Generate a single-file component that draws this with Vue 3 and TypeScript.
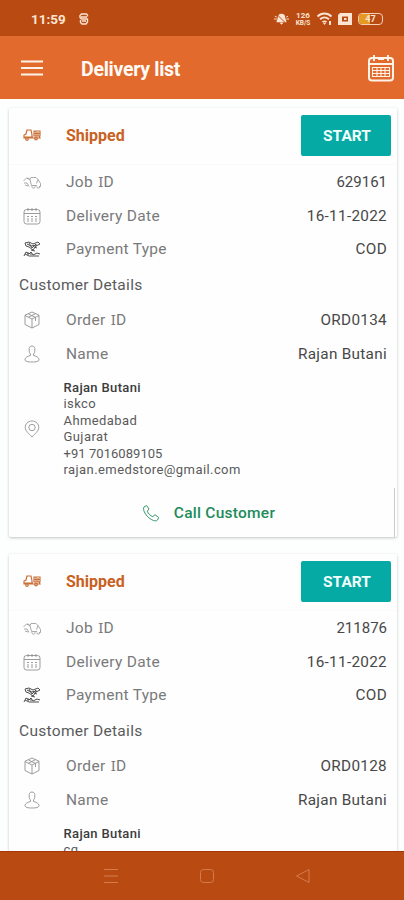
<script setup lang="ts">
interface Row {
  icon: 'job' | 'calendar' | 'payment' | 'box' | 'person'
  label: string
  value: string
}

interface Delivery {
  status: string
  job: Row[]
  customer: Row[]
  name: string
  address: string[]
}

function makeDelivery(jobId: string, orderId: string, address: string[]): Delivery {
  return {
    status: 'Shipped',
    job: [
      { icon: 'job', label: 'Job ID', value: jobId },
      { icon: 'calendar', label: 'Delivery Date', value: '16-11-2022' },
      { icon: 'payment', label: 'Payment Type', value: 'COD' },
    ],
    customer: [
      { icon: 'box', label: 'Order ID', value: orderId },
      { icon: 'person', label: 'Name', value: 'Rajan Butani' },
    ],
    name: 'Rajan Butani',
    address,
  }
}

const deliveries: Delivery[] = [
  makeDelivery('629161', 'ORD0134', ['iskco', 'Ahmedabad', 'Gujarat', '+91 7016089105', 'rajan.emedstore@gmail.com']),
  makeDelivery('211876', 'ORD0128', ['cg']),
]

// The capital I is set in a face that draws it with bars.
function splitLabel(label: string): { text: string; barred: boolean }[] {
  return label
    .split(/(I)/)
    .filter((text) => text !== '')
    .map((text) => ({ text, barred: text === 'I' }))
}

function isNumber(text: string): boolean {
  return /^[+\d\s]+$/.test(text)
}

const paths: Record<Row['icon'], string> = {
  job: 'M0.500 8l3-3 3 .5M1 10h3l2 3.500M4 5l3 2M7 6.500l1-2h5l2 2M7 6.500l1.500 6h5.500M15 6.500l2.500 4v3h-1.500M15 6.500l-1.500 4M2 12l3 1M9 13a1.600 1.600 0 1 0 3 0M14 13.500a1.300 1.300 0 1 0 2.500 0',
  calendar: 'M3.5 2.5h11a2.5 2.5 0 0 1 2.5 2.500v9.500a2.500 2.500 0 0 1-2.500 2.500h-11A2.500 2.500 0 0 1 1 14.500V5A2.500 2.500 0 0 1 3.500 2.500zM1 6.500h16M5 1v3M9 1v3M13 1v3M4 9.500h2M8 9.500h2M12 9.500h2M4 12h2M8 12h2M12 12h2M4 14h2M8 14h2M12 14h2',
  payment: 'M2 3l4-1 4 2 5-2 2 2-4 2-3 4-4-3-3-1zM4 4l4 2 6-1M6 3l3 5 4-4M8 10l4 1M1 16l2-4 3 2 2-2 2 3 4-2 3 1M2 14l4 2h3l4 0 3 0M11 7l3 1M5 12v3M8 13v2',
  box: 'M9 1l7 3.200v9.300L9 17l-7-3.500V4.200zM2 4.500l7 3.500 7-3.500M9 8v9M5.500 3l7 3.500v3.500M5.500 6.200l7-3.500',
  person: 'M9 1C6.500 1 6 3 6.200 5c0 2 .5 3 1.300 4v1.500c-3 .8-5.500 2-5.500 4C2 16.500 5 17 9 17s7-.5 7-2.500c0-2-2.500-3.200-5.500-4V9c.8-1 1.300-2 1.300-4C12 3 11.500 1 9 1z',
}
</script>

<template>
  <div class="phone">
    <header class="status-bar">
      <span class="clock">11:59</span>
      <svg class="app-mark" viewBox="0 0 10 12"><path d="M8.500 3.500V2.200L7.500 1h-5L1 2.500v2L2.500 6h6v3L7 11H3L1.500 9.500V7M2 4h6M3 8h4" /></svg>
      <div class="system">
        <svg class="bell" viewBox="0 0 18 14"><path class="solid" d="M9 1.500c3 0 4 2 4 4.500l1.500 4.500h-11L5 6c0-2.500 1-4.500 4-4.500zM7 11h4l-2 2z" /><path d="M1 7h3M14 7h3M2 4l2 1M16 4l-2 1" /><path class="slash" d="M4 2l11 11" /></svg>
        <span class="speed"><b>126</b><small>KB/S</small></span>
        <svg class="wifi" viewBox="0 0 17 14"><path d="M1.500 4.500c4-4 10-4 14 0M4 7.300c3-2.500 6-2.500 9 0M6.500 10c1.500-1 2.500-1 4 0" /><path class="solid" d="M7 11h3l-1.500 2zM13 9h2v4h-2z" /></svg>
        <svg class="sim" viewBox="0 0 14 12"><path class="solid" fill-rule="evenodd" d="M2 0h12v12H0V2zM4 3.500v5h6v-5zM6 5h2.500v2H6z" /></svg>
        <span class="battery"><span class="charge"></span><span class="percent">47</span></span>
      </div>
    </header>

    <nav class="app-bar">
      <svg class="menu" viewBox="0 0 22 16"><path d="M0 1.500h22M0 8h22M0 14.500h22" /></svg>
      <h1>Delivery list</h1>
      <svg class="app-calendar" viewBox="0 0 28 28"><rect x="2" y="4" width="24" height="22.500" rx="3" /><path d="M2 10h24M7 1v6M21 1v6M11 5h6" /><path class="grid" d="M5 13.500h18M5 16.500h18M5 19.500h18M5 22.500h18M5.500 13v10M10 13v10M14 13v10M18 13v10M22.500 13v10" /></svg>
    </nav>

    <main class="list">
      <article v-for="(delivery, index) in deliveries" :key="index" class="card">
        <div class="card-head">
          <svg class="icon truck" viewBox="0 0 18 12"><path d="M1 9V6l2-1 1-4h4l1 5v3zM1 8h9M4 1l-1 4M11 2h6v5h-6zM11 4.500h6M13 2v5M9 9h8l-1-2M15 3v4" /><circle cx="4" cy="10" r="1.300" /><circle cx="13" cy="9.500" r="1.300" /></svg>
          <span class="status">{{ delivery.status }}</span>
          <button class="start">START</button>
        </div>

        <div v-for="row in delivery.job" :key="row.label" class="row">
          <svg class="icon" :class="row.icon" viewBox="0 0 18 18"><path :d="paths[row.icon]" /></svg>
          <span class="label"><span v-for="(part, i) in splitLabel(row.label)" :key="i" :class="{ barred: part.barred }">{{ part.text }}</span></span>
          <span class="value" :class="{ numeric: isNumber(row.value) }">{{ row.value }}</span>
        </div>

        <h2>Customer Details</h2>

        <div v-for="row in delivery.customer" :key="row.label" class="row">
          <svg class="icon" :class="row.icon" viewBox="0 0 18 18"><path :d="paths[row.icon]" /></svg>
          <span class="label"><span v-for="(part, i) in splitLabel(row.label)" :key="i" :class="{ barred: part.barred }">{{ part.text }}</span></span>
          <span class="value">{{ row.value }}</span>
        </div>

        <div class="address">
          <svg class="icon pin" viewBox="0 0 18 18"><path d="M9 1C5 1 2.200 4 2.200 7.500c0 3.500 3.800 6 6.800 9.500 3-3.500 6.800-6 6.800-9.500C15.800 4 13 1 9 1z" /><circle cx="9" cy="7.500" r="3.200" /></svg>
          <div class="lines">
            <strong>{{ delivery.name }}</strong>
            <span v-for="line in delivery.address" :key="line" :class="{ tight: isNumber(line) }">{{ line }}</span>
          </div>
        </div>

        <div class="call">
          <svg class="phone-icon" viewBox="0 0 18 18"><path d="M4.500 1.500L2 3c-1 1-.5 4 1.500 7s5 5.500 8 6.500c2 .6 3 .5 4-.5l1.200-2.500-3.700-2.800-2.200 2c-2.500-1-4.500-3-5.500-5.500L7 5z" /></svg>
          <span>Call Customer</span>
        </div>
      </article>
    </main>

    <footer class="nav-bar">
      <svg viewBox="0 0 16 16"><path d="M1 1.500h14M1 8h14M1 14.500h14" /></svg>
      <svg viewBox="0 0 16 16"><rect x="1.500" y="1.500" width="13" height="13" rx="3" /></svg>
      <svg viewBox="0 0 16 16"><path d="M14 1.500v13L1.500 8z" /></svg>
    </footer>
  </div>
</template>

<style>
body {
  margin: 0;
}
</style>

<style scoped>
.phone {
  display: flex;
  flex-direction: column;
  width: 404px;
  height: 900px;
  overflow: hidden;
  background: #fdfefe;
  font-family: Roboto, 'Liberation Sans', sans-serif;
}

svg {
  flex: none;
  fill: none;
  stroke: currentColor;
}

.solid {
  fill: currentColor;
  stroke: none;
}

.status-bar {
  display: flex;
  flex: none;
  align-items: center;
  box-sizing: border-box;
  height: 36px;
  padding: 2px 21px 0 31px;
  background: #b94a12;
  color: #fbe4d2;
}

.clock {
  width: 48px;
  font-size: 13.500px;
  font-weight: 700;
}

.app-mark {
  width: 10px;
  height: 12px;
  stroke-width: 1.400;
}

.system {
  display: flex;
  align-items: center;
  margin-left: auto;
}

.bell {
  width: 17px;
  height: 14px;
  margin-right: 5px;
}

.slash {
  stroke: #b94a12;
}

.speed {
  display: flex;
  flex-direction: column;
  align-items: center;
  width: 16px;
  margin-right: 5px;
  font-size: 8px;
  line-height: 8px;
}

.speed small {
  font-size: 6.500px;
  font-weight: 700;
  line-height: 7px;
}

.wifi {
  width: 17px;
  height: 14px;
  margin-right: 5px;
  stroke-width: 1.800;
}

.sim {
  width: 14px;
  height: 12px;
  margin-right: 6px;
}

.battery {
  position: relative;
  box-sizing: border-box;
  width: 25px;
  height: 12px;
  border: 1px solid #f3cfb4;
  border-radius: 4px;
  overflow: hidden;
}

.charge {
  display: block;
  width: 11px;
  height: 10px;
  background: #e79a23;
}

.percent {
  position: absolute;
  inset: 0;
  font-size: 9px;
  font-weight: 700;
  line-height: 10px;
  text-align: center;
}

.app-bar {
  display: flex;
  flex: none;
  align-items: center;
  box-sizing: border-box;
  height: 63px;
  padding: 0 9px 0 21px;
  background: #e16a2c;
  color: #fff3e9;
}

.menu {
  width: 22px;
  height: 16px;
  stroke-width: 2.200;
}

h1 {
  margin: 3px 0 0 38px;
  color: #fffaf5;
  font-size: 19.500px;
  font-weight: 700;
  letter-spacing: -0.28px;
}

.app-calendar {
  width: 28px;
  height: 28px;
  margin: 0 0 0 auto;
  stroke-width: 2;
}

.app-calendar .grid {
  stroke-width: 1.100;
}

.list {
  flex: 1;
  min-height: 0;
  padding: 9px 7px 0 9px;
  overflow: hidden;
}

.card {
  display: flex;
  flex-direction: column;
  height: 429px;
  margin-bottom: 17px;
  border-radius: 2px;
  background: #fefefe;
  box-shadow: 0 1px 3px rgba(0, 0, 0, 0.24);
}

.card-head {
  display: flex;
  align-items: center;
  box-sizing: border-box;
  height: 57px;
  padding: 0 6px 2px 14px;
  border-bottom: 1px solid #fafafa;
}

.icon {
  width: 18px;
  height: 18px;
  margin-right: 25px;
  color: #8b8b8b;
  stroke-width: 0.850;
}

.truck {
  height: 12px;
  color: #c97139;
  stroke-width: 1.200;
}

.job {
  color: #9b9b9b;
}

.payment {
  color: #4e4e4e;
  stroke-width: 1;
}

.status {
  color: #c9611f;
  font-size: 16px;
  font-weight: 700;
  letter-spacing: 0;
}

.start {
  width: 90px;
  height: 41px;
  margin-left: auto;
  padding: 1px 0 0 2px;
  border: 0;
  border-radius: 2px;
  background: #06aaa4;
  color: #f1fffd;
  font: 700 15.500px Roboto, sans-serif;
}

.row {
  display: flex;
  align-items: center;
  height: 33.800px;
  padding: 0 10px 0 14px;
}

.label {
  color: #7a7a7a;
  font-size: 15.500px;
  letter-spacing: 0.3px;
}

.barred {
  margin-left: 1px;
  font-family: 'Noto Sans', sans-serif;
  font-size: 15px;
  line-height: 1;
}

.value {
  margin-left: auto;
  color: #484848;
  font-size: 15.300px;
  letter-spacing: 0.3px;
}

.numeric {
  font-size: 15px;
  letter-spacing: 0;
}

h2 {
  height: 37px;
  margin: 0;
  padding-left: 10px;
  color: #5a5a5a;
  font-size: 15.500px;
  font-weight: 400;
  letter-spacing: 0.3px;
  line-height: 38px;
}

.address {
  display: flex;
  align-items: center;
  height: 117px;
  padding-left: 14px;
}

.pin {
  margin-right: 22.500px;
}

.lines {
  display: flex;
  flex-direction: column;
  align-self: flex-start;
  padding-top: 9px;
  color: #5a5a5a;
  font-size: 13px;
  letter-spacing: 0.42px;
  line-height: 16.500px;
}

.lines .tight {
  letter-spacing: 0.05px;
}

.lines strong {
  color: #3c3c3c;
  font-weight: 500;
  letter-spacing: 0.35px;
}

.call {
  display: flex;
  align-items: center;
  justify-content: center;
  gap: 14px;
  box-sizing: border-box;
  height: 49px;
  margin-right: 2px;
  padding: 1px 0 0 14px;
  border-right: 1px solid #ccc;
  color: #218b5c;
  font-size: 15.500px;
  font-weight: 500;
  letter-spacing: 0.25px;
}

.phone-icon {
  width: 18px;
  height: 18px;
  stroke-width: 0.900;
}

.nav-bar {
  display: flex;
  flex: none;
  align-items: center;
  justify-content: space-between;
  box-sizing: border-box;
  height: 49px;
  padding: 0 93px 0 103px;
  border-top: 1px solid #a53508;
  background: #b94a12;
  color: #d77b4c;
}

.nav-bar svg {
  width: 16px;
  height: 16px;
}
</style>
